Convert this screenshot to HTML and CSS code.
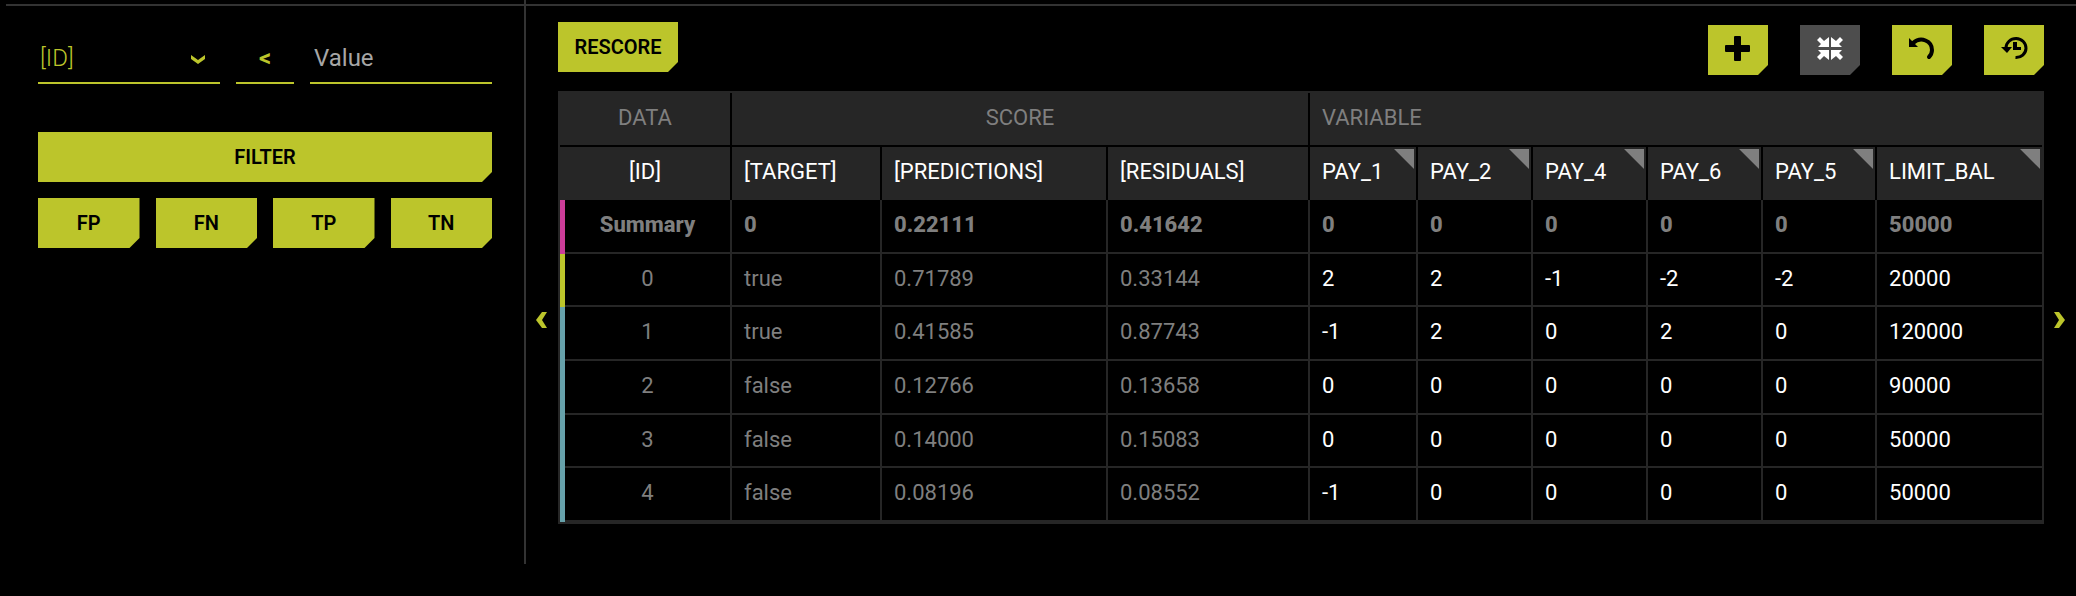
FILE: index.html
```
<!DOCTYPE html>
<html lang="en">
<head>
<meta charset="utf-8">
<title>What-if table</title>
<link rel="stylesheet" href="styles.css">
</head>
<body>
<div class="page">
  <aside class="sidebar">
    <form class="query">
      <select class="field field-select" aria-label="Column"><option>[ID]</option></select>
      <button type="button" class="field field-op" aria-label="Operator: less than">&lt;</button>
      <input class="field field-value" type="text" placeholder="Value" aria-label="Value">
    </form>
    <button type="button" class="btn">FILTER</button>
    <div class="quick">
      <button type="button" class="btn">FP</button>
      <button type="button" class="btn">FN</button>
      <button type="button" class="btn">TP</button>
      <button type="button" class="btn">TN</button>
    </div>
  </aside>
  <button type="button" class="pager" aria-label="Previous columns">
    <svg width="12" height="16" viewBox="0 0 12 16"><path d="M6 0h5L6 8l5 8H6L0 8z"/></svg>
  </button>
  <main class="content">
    <div class="toolbar">
      <button type="button" class="btn btn-rescore">RESCORE</button>
      <div class="tools">
        <button type="button" class="btn btn-icon" aria-label="Add">
          <svg viewBox="0 0 60 50"><rect x="26" y="11" width="7" height="25" rx="1"/><rect x="17" y="20" width="25" height="7" rx="1"/></svg>
        </button>
        <button type="button" class="btn btn-icon btn-off" aria-label="Collapse">
          <svg viewBox="0 0 60 50"><path d="M29 22H18l3-3-4-4 3-3 4 4 5-4z"/><path d="M31 22h11l-3-3 4-4-3-3-4 4-5-4z"/><path d="M29 25H18l3 3-4 4 3 3 4-4 5 4z"/><path d="M31 25h11l-3 3 4 4-3 3-4-4-5 4z"/></svg>
        </button>
        <button type="button" class="btn btn-icon" aria-label="Undo">
          <svg viewBox="0 0 60 50"><path d="M17 13v9h9z"/><path class="stroke" d="M21 18C29 11 40 16 40 25 40 28 39 30 37 32"/></svg>
        </button>
        <button type="button" class="btn btn-icon" aria-label="Restore history">
          <svg viewBox="0 0 60 50"><path d="M17 22h11l-5 6z"/><path class="stroke thin" d="M22 23a10 9.500 0 1 1 9.500 9.500"/><path d="M29 17h4v5h4v3h-8z"/></svg>
        </button>
      </div>
    </div>
    <div class="table-box">
    <table class="grid">
      <colgroup><col class="c-id"><col class="c-target"><col class="c-pred"><col class="c-resid"><col class="c-pay1"><col class="c-pay"><col class="c-pay"><col class="c-pay"><col class="c-pay5"><col class="c-limit"></colgroup>
      <thead>
        <tr class="groups"><th class="center" scope="col">DATA</th><th class="center" colspan="3" scope="colgroup">SCORE</th><th colspan="6" scope="colgroup">VARIABLE</th></tr>
        <tr class="names"><th class="center" scope="col">[ID]</th><th scope="col">[TARGET]</th><th scope="col">[PREDICTIONS]</th><th scope="col">[RESIDUALS]</th><th class="var" scope="col">PAY_1</th><th class="var" scope="col">PAY_2</th><th class="var" scope="col">PAY_4</th><th class="var" scope="col">PAY_6</th><th class="var" scope="col">PAY_5</th><th class="var" scope="col">LIMIT_BAL</th></tr>
      </thead>
      <tbody>
        <tr class="summary"><th scope="row">Summary</th><td>0</td><td>0.22111</td><td>0.41642</td><td>0</td><td>0</td><td>0</td><td>0</td><td>0</td><td>50000</td></tr>
        <tr class="active"><th scope="row">0</th><td>true</td><td>0.71789</td><td>0.33144</td><td>2</td><td>2</td><td>-1</td><td>-2</td><td>-2</td><td>20000</td></tr>
        <tr><th scope="row">1</th><td>true</td><td>0.41585</td><td>0.87743</td><td>-1</td><td>2</td><td>0</td><td>2</td><td>0</td><td>120000</td></tr>
        <tr><th scope="row">2</th><td>false</td><td>0.12766</td><td>0.13658</td><td>0</td><td>0</td><td>0</td><td>0</td><td>0</td><td>90000</td></tr>
        <tr><th scope="row">3</th><td>false</td><td>0.14000</td><td>0.15083</td><td>0</td><td>0</td><td>0</td><td>0</td><td>0</td><td>50000</td></tr>
        <tr><th scope="row">4</th><td>false</td><td>0.08196</td><td>0.08552</td><td>-1</td><td>0</td><td>0</td><td>0</td><td>0</td><td>50000</td></tr>
      </tbody>
    </table>
    </div>
  </main>
  <button type="button" class="pager" aria-label="Next columns">
    <svg width="12" height="16" viewBox="0 0 12 16"><path d="M0 0h5l6 8-6 8H0l5-8z"/></svg>
  </button>
</div>
</body>
</html>
```
FILE: styles.css
```
:root {
  --lime: #bcc52b;
  --panel: #262626;
  --line: #333;
  --muted: #7f7f7f;
}
* { box-sizing: border-box; }
body {
  margin: 0;
  background: #000;
  color: #fff;
  font: 22px/28px Roboto, "Liberation Sans", sans-serif;
}
button, input, select { font: inherit; border: 0; border-radius: 0; padding: 0; margin: 0; }
.page { position: relative; display: flex; padding-bottom: 32px; }
.page::before {
  content: "";
  position: absolute;
  top: 4px;
  left: 6px;
  right: 0;
  height: 2px;
  background: var(--line);
}
.sidebar {
  flex: none;
  width: 526px;
  padding: 34px 32px 0 38px;
  border-right: 2px solid var(--line);
}
.query {
  display: grid;
  grid-template-columns: 1fr 58px 1fr;
  gap: 16px;
  margin-bottom: 48px;
}
.field {
  height: 50px;
  width: 100%;
  border-bottom: 2px solid var(--lime);
  background: transparent;
  color: var(--lime);
  font-size: 24px;
  outline: 0;
}
.field-select {
  appearance: none;
  padding-left: 2px;
  font-weight: 300;
  background: url("data:image/svg+xml,%3Csvg xmlns='http://www.w3.org/2000/svg' width='14' height='9'%3E%3Cpath fill='%23bcc52b' d='M0 0l7 5 7-5v4L7 9 0 4z'/%3E%3C/svg%3E") no-repeat right 15px top 21px;
}
.field-op { font-weight: 700; }
.field-value { padding-left: 4px; }
.field-value::placeholder { color: #a6a6a6; opacity: 1; }
.btn {
  display: block;
  width: 100%;
  height: 50px;
  background: var(--lime);
  color: #000;
  font-size: 20px;
  font-weight: 600;
  clip-path: polygon(0 0, 100% 0, 100% calc(100% - 10px), calc(100% - 10px) 100%, 0 100%);
}
.quick { display: grid; grid-template-columns: repeat(4, 1fr); gap: 16px; margin-top: 16px; }
.pager {
  flex: none;
  width: 32px;
  padding-top: 78px;
  background: transparent;
  fill: var(--lime);
}
.content { flex: 1; min-width: 0; padding: 22px 0 40px; }
.toolbar { display: flex; justify-content: space-between; align-items: flex-start; margin-bottom: 16px; }
.btn-rescore { width: 120px; }
.tools { display: flex; gap: 32px; padding-top: 3px; }
.btn-icon { width: 60px; }
.btn-icon svg { display: block; width: 60px; height: 50px; }
.btn-off { background: #4d4d4d; fill: #fff; }
.stroke { fill: none; stroke: #000; stroke-width: 4; stroke-linecap: round; }
.thin { stroke-width: 3; stroke-linecap: butt; }
.table-box { border: 2px solid var(--panel); }
.grid { width: 100%; table-layout: fixed; border-collapse: separate; border-spacing: 0; }
.c-id { width: 172px; }
.c-target { width: 150px; }
.c-pred { width: 226px; }
.c-resid { width: 202px; }
.c-pay1 { width: 108px; }
.c-pay { width: 115px; }
.c-pay5 { width: 114px; }
.c-limit { width: 165px; }
.grid th, .grid td {
  height: 54px;
  padding: 0 0 2px 12px;
  border: 0 solid var(--panel);
  border-width: 0 2px 2px 0;
  text-align: left;
  font-weight: 400;
}
.grid tr > :last-child { border-right: 0; }
.grid .center { padding: 0 0 2px; text-align: center; }
.grid thead th { background: var(--panel); border-color: #000; }
.grid .groups th { color: var(--muted); }
.grid .names th { height: 53px; border-bottom: 0; padding-bottom: 4px; }
.grid .names .var { position: relative; }
.grid .names .var::after {
  content: "";
  position: absolute;
  top: 2px;
  right: 2px;
  width: 20px;
  height: 20px;
  background: var(--muted);
  clip-path: polygon(0 0, 100% 0, 100% 100%);
}
.grid tbody th {
  padding: 0 0 4px;
  border-left: 5px solid #66a1aa;
  text-align: center;
  color: var(--muted);
  border-bottom-width: 0;
  box-shadow: inset 0 -2px var(--panel);
}
.grid tbody tr:nth-child(3n + 2) > * { height: 53px; }
.grid td:nth-child(-n + 4) { color: var(--muted); }
.grid .active th { border-left-color: var(--lime); }
.grid .summary th { border-left-color: #cc3d99; }
.grid .summary > * { color: var(--muted); font-weight: 800; }
```
